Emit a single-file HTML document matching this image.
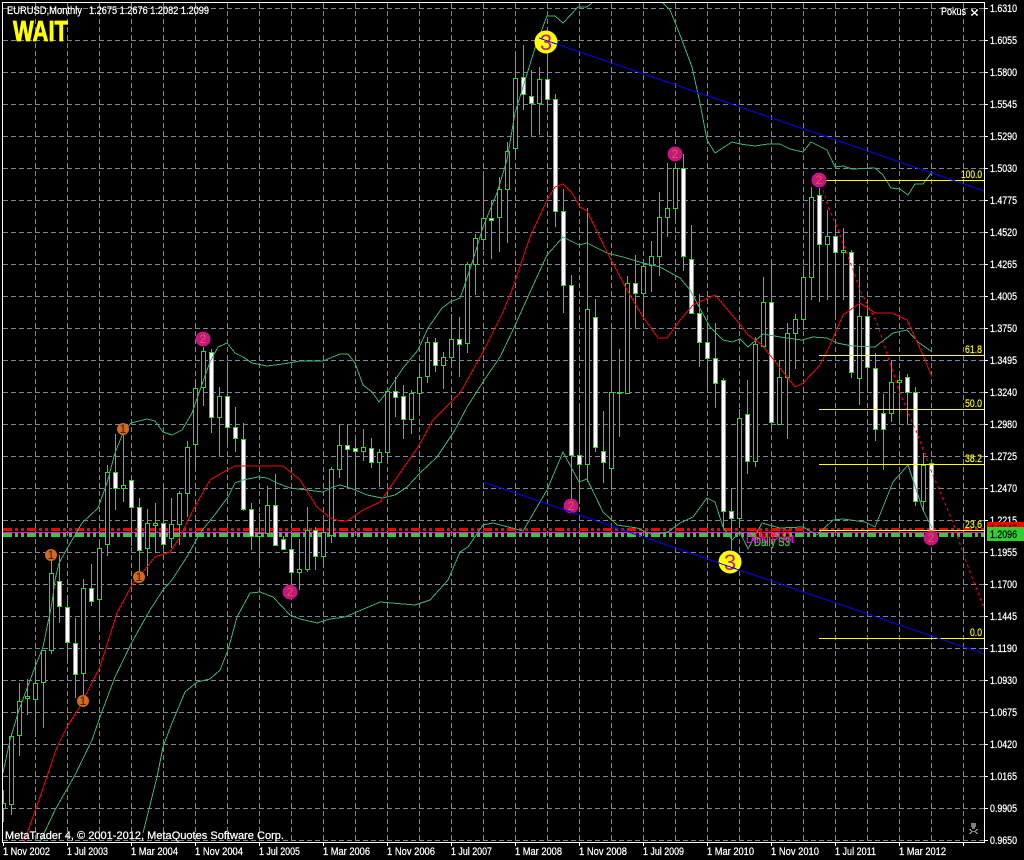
<!DOCTYPE html>
<html lang="en">
<head>
<meta charset="utf-8">
<title>EURUSD,Monthly</title>
<style>
html,body{margin:0;padding:0;background:#000;width:1024px;height:860px;overflow:hidden}
svg{display:block;position:absolute;left:0;top:0}
text{font-family:"Liberation Sans",sans-serif;font-size:11px;fill:#fff}
.t{stroke:#fff;stroke-width:.25}
.l{fill:#ffff00;stroke:#ffff00;stroke-width:.2}
</style>
</head>
<body>
<svg width="1024" height="860" viewBox="0 0 1024 860" xmlns="http://www.w3.org/2000/svg">
<rect width="1024" height="860" fill="#000"/>
<!-- grid -->
<path fill="none" stroke="#778899" stroke-width="1" stroke-dasharray="5 3" shape-rendering="crispEdges" d="M3 8.5H984M3 40.5H984M3 72.5H984M3 104.5H984M3 136.5H984M3 168.5H984M3 200.5H984M3 232.5H984M3 264.5H984M3 296.5H984M3 328.5H984M3 360.5H984M3 392.5H984M3 424.5H984M3 456.5H984M3 488.5H984M3 520.5H984M3 552.5H984M3 584.5H984M3 616.5H984M3 648.5H984M3 680.5H984M3 712.5H984M3 744.5H984M3 776.5H984M3 808.5H984M3 840.5H984M35.5 3V842M67.5 3V842M99.5 3V842M131.5 3V842M163.5 3V842M195.5 3V842M227.5 3V842M259.5 3V842M291.5 3V842M323.5 3V842M355.5 3V842M387.5 3V842M419.5 3V842M451.5 3V842M483.5 3V842M515.5 3V842M547.5 3V842M579.5 3V842M611.5 3V842M643.5 3V842M675.5 3V842M707.5 3V842M739.5 3V842M771.5 3V842M803.5 3V842M835.5 3V842M867.5 3V842M899.5 3V842M931.5 3V842M963.5 3V842"/>
<!-- horizontal level bands -->
<g shape-rendering="crispEdges" fill="none">
<path d="M3 529.5H984" stroke="#ff0000" stroke-width="3" stroke-dasharray="9 3 3 3 3 3"/>
<path d="M3 535H984" stroke="#32cd32" stroke-width="4" stroke-dasharray="9 3 3 3 3 3"/>
<path d="M3 532.5H984" stroke="#ff00ff" stroke-width="1"/>
</g>
<!-- candle wicks -->
<path fill="none" stroke="#10f010" shape-rendering="crispEdges" d="M3.5 790V822M11.5 733V815M19.5 683V756M27.5 679V715M35.5 662V737M43.5 650V728M51.5 559V654M59.5 555V623M67.5 595V659M75.5 618V698M83.5 579V696M91.5 564V606M99.5 542V627M107.5 465V556M115.5 434V510M123.5 435V502M131.5 480V546M139.5 498V572M147.5 509V576M155.5 503V553M163.5 489V548M171.5 498V548M179.5 491V545M187.5 441V517M195.5 380V467M203.5 347V406M211.5 349V433M219.5 387V457M227.5 362V443M235.5 407V452M243.5 423V511M251.5 503V550M259.5 513V563M267.5 486V533M275.5 474V545M283.5 536V550M291.5 533V590M299.5 539V590M307.5 507V572M315.5 527V570M323.5 520V568M331.5 467V543M339.5 425V478M347.5 425V487M355.5 439V490M363.5 429V461M371.5 438V468M379.5 449V487M387.5 390V462M395.5 377V417M403.5 385V439M411.5 390V434M419.5 368V413M427.5 337V383M435.5 338V372M443.5 352V389M451.5 314V363M459.5 317V377M467.5 262V353M475.5 234V295M483.5 176V250M491.5 201V259M499.5 177V252M507.5 142V243M515.5 56V155M523.5 45V110M531.5 70V137M539.5 67V135M547.5 53V107M555.5 94V227M563.5 189V313M571.5 275V502M579.5 408V502M587.5 208V482M595.5 299V452M603.5 411V483M611.5 330V490M619.5 349V437M627.5 276V393M635.5 255V328M643.5 259V318M651.5 241V292M659.5 192V276M667.5 163V237M675.5 163V220M683.5 154V271M691.5 225V313M699.5 294V367M707.5 323V390M715.5 323V408M723.5 378V528M731.5 488V550M739.5 409V527M747.5 380V474M755.5 337V467M763.5 277V346M771.5 262V427M779.5 360V425M787.5 323V439M795.5 314V369M803.5 266V330M811.5 187V300M819.5 188V302M827.5 210V300M835.5 224V318M843.5 228V300M851.5 250V378M859.5 266V405M867.5 305V387M875.5 353V441M883.5 394V470M891.5 361V422M899.5 376V422M907.5 374V424M915.5 387V506M923.5 453V512M931.5 463V538"/>
<!-- bull bodies -->
<path fill="#000" stroke="#10f010" shape-rendering="crispEdges" d="M1.5 803.5h4V808.5h-4zM9.5 736.5h4V804.5h-4zM17.5 701.5h4V735.5h-4zM25.5 696.5h4V698.5h-4zM33.5 683.5h4V699.5h-4zM41.5 650.5h4V682.5h-4zM49.5 573.5h4V650.5h-4zM81.5 588.5h4V673.5h-4zM97.5 548.5h4V599.5h-4zM105.5 472.5h4V544.5h-4zM121.5 485.5h4V488.5h-4zM145.5 523.5h4V548.5h-4zM153.5 523.5h4V525.5h-4zM169.5 524.5h4V538.5h-4zM177.5 493.5h4V524.5h-4zM185.5 447.5h4V493.5h-4zM193.5 388.5h4V444.5h-4zM201.5 351.5h4V387.5h-4zM217.5 396.5h4V417.5h-4zM257.5 533.5h4V536.5h-4zM265.5 505.5h4V533.5h-4zM297.5 569.5h4V572.5h-4zM305.5 530.5h4V569.5h-4zM321.5 532.5h4V556.5h-4zM329.5 469.5h4V535.5h-4zM337.5 445.5h4V469.5h-4zM361.5 447.5h4V451.5h-4zM377.5 452.5h4V462.5h-4zM385.5 391.5h4V452.5h-4zM409.5 393.5h4V419.5h-4zM417.5 377.5h4V393.5h-4zM425.5 342.5h4V376.5h-4zM441.5 357.5h4V365.5h-4zM449.5 339.5h4V357.5h-4zM465.5 264.5h4V343.5h-4zM473.5 238.5h4V264.5h-4zM481.5 218.5h4V239.5h-4zM497.5 189.5h4V217.5h-4zM505.5 151.5h4V189.5h-4zM513.5 78.5h4V148.5h-4zM537.5 79.5h4V103.5h-4zM585.5 309.5h4V464.5h-4zM609.5 392.5h4V468.5h-4zM617.5 392.5h4V393.5h-4zM625.5 283.5h4V393.5h-4zM641.5 266.5h4V293.5h-4zM649.5 256.5h4V265.5h-4zM657.5 217.5h4V256.5h-4zM665.5 208.5h4V217.5h-4zM673.5 168.5h4V208.5h-4zM737.5 418.5h4V518.5h-4zM753.5 344.5h4V461.5h-4zM761.5 302.5h4V346.5h-4zM777.5 377.5h4V424.5h-4zM785.5 333.5h4V377.5h-4zM793.5 319.5h4V333.5h-4zM801.5 277.5h4V319.5h-4zM809.5 197.5h4V277.5h-4zM825.5 236.5h4V244.5h-4zM841.5 250.5h4V252.5h-4zM857.5 316.5h4V378.5h-4zM889.5 382.5h4V413.5h-4zM897.5 380.5h4V382.5h-4zM921.5 465.5h4V501.5h-4z"/>
<!-- bear bodies -->
<path fill="#fff" stroke="#10f010" shape-rendering="crispEdges" d="M57.5 581.5h4V606.5h-4zM65.5 607.5h4V642.5h-4zM73.5 643.5h4V674.5h-4zM89.5 588.5h4V601.5h-4zM113.5 472.5h4V488.5h-4zM129.5 480.5h4V507.5h-4zM137.5 507.5h4V550.5h-4zM161.5 523.5h4V544.5h-4zM209.5 352.5h4V417.5h-4zM225.5 396.5h4V427.5h-4zM233.5 427.5h4V438.5h-4zM241.5 439.5h4V509.5h-4zM249.5 509.5h4V536.5h-4zM273.5 505.5h4V545.5h-4zM281.5 539.5h4V549.5h-4zM289.5 549.5h4V572.5h-4zM313.5 530.5h4V556.5h-4zM345.5 445.5h4V449.5h-4zM353.5 448.5h4V451.5h-4zM369.5 448.5h4V462.5h-4zM393.5 391.5h4V397.5h-4zM401.5 396.5h4V419.5h-4zM433.5 342.5h4V365.5h-4zM457.5 339.5h4V344.5h-4zM489.5 218.5h4V220.5h-4zM521.5 77.5h4V94.5h-4zM529.5 96.5h4V103.5h-4zM545.5 79.5h4V99.5h-4zM553.5 99.5h4V211.5h-4zM561.5 211.5h4V285.5h-4zM569.5 285.5h4V455.5h-4zM577.5 455.5h4V464.5h-4zM593.5 317.5h4V447.5h-4zM601.5 451.5h4V462.5h-4zM633.5 283.5h4V293.5h-4zM681.5 168.5h4V256.5h-4zM689.5 259.5h4V313.5h-4zM697.5 313.5h4V342.5h-4zM705.5 342.5h4V358.5h-4zM713.5 358.5h4V383.5h-4zM721.5 380.5h4V511.5h-4zM729.5 511.5h4V518.5h-4zM745.5 414.5h4V461.5h-4zM769.5 302.5h4V422.5h-4zM817.5 195.5h4V244.5h-4zM833.5 236.5h4V252.5h-4zM849.5 252.5h4V372.5h-4zM865.5 316.5h4V367.5h-4zM873.5 368.5h4V429.5h-4zM881.5 413.5h4V429.5h-4zM905.5 377.5h4V392.5h-4zM913.5 392.5h4V501.5h-4zM929.5 463.5h4V530.5h-4z"/>
<!-- bollinger / MA lines -->
<g fill="none" shape-rendering="crispEdges">
<polyline stroke="#3cb371" points="3,773 10,740 19,710 35,667 43,647 52,603 55,580 59,563 68,547 82,523 98,508 107,483 115,453 123,433 131,423 147,419 155,421 163,432 172,435 182,430 192,413 200,390 210,362 218,347 227,343 235,353 243,357 252,363 267,366 283,364 300,361 323,361 340,354 348,354 355,363 363,385 372,392 379,402 390,388 403,368 418,350 428,328 442,308 450,302 460,298 463,290 473,260 483,227 497,193 507,160 515,113 523,87 535,48 547,16 555,16 563,23 578,7 587,7 592,3"/>
<polyline stroke="#3cb371" points="663,3 670,10 680,35 692,67 700,103 707,140 715,153 732,142 740,144 755,146 768,144 780,144 790,149 803,152 811,142 827,150 835,167 843,166 852,169 875,168 883,175 891,188 900,189 908,195 915,184 923,184 932,172"/>
<polyline stroke="#3cb371" points="40,842 55,810 75,775 92,740 100,717 115,677 132,642 150,610 163,590 172,580 188,555 200,533 213,517 228,497 235,483 243,480 258,477 267,478 277,483 290,488 307,490 323,492 333,487 340,485 353,489 367,495 382,498 395,495 407,487 420,473 437,457 455,430 467,407 483,382 500,357 512,332 531,290 547,255 563,237 579,245 587,243 607,253 623,257 643,263 660,267 680,278 690,290 710,327 723,340 732,342 740,339 748,347 763,334 780,337 802,340 813,337 827,338 837,343 852,346 875,347 893,333 907,330 918,342 932,352"/>
<polyline stroke="#3cb371" points="143,833 157,777 163,747 172,723 185,692 197,682 210,679 220,670 228,650 237,617 250,593 260,592 273,597 290,615 300,619 317,623 330,619 345,617 380,602 415,605 430,600 448,580 460,552 468,547 483,525 493,523 508,527 523,531 537,507 547,490 563,452 579,482 587,479 603,512 617,525 637,528 653,535 668,532 680,523 693,517 707,498 715,502 723,527 732,540 740,532 748,549 762,523 780,528 803,527 817,535 833,520 843,519 865,522 875,527 893,482 908,465 923,510 932,528"/>
<polyline stroke="#ff0000" points="24,842 40,797 57,747 68,725 78,710 100,667 117,613 133,583 143,572 155,557 170,552 180,537 193,510 210,480 227,470 235,466 257,466 283,466 300,480 317,507 330,518 340,521 347,521 363,510 380,502 400,473 418,447 433,420 460,393 483,352 503,312 512,290 530,237 547,200 555,187 563,184 572,193 580,207 587,211 607,252 627,290 643,317 658,338 667,338 680,320 693,305 715,295 738,322 748,335 762,345 795,387 803,383 820,365 830,345 843,315 860,303 875,313 892,313 907,320 923,355 932,377"/>
<polyline stroke="#ff0000" stroke-dasharray="3 3" points="823,190 828,207 837,227 843,243 852,267 860,290 877,323 890,363 900,393 908,413 917,433 932,473 952,520 963,553 973,580 984,608"/>
</g>
<!-- labels overlapping -->
<text x="746" y="543" style="font-size:12px;fill:#ff00ff;stroke:#ff00ff;stroke-width:.2" textLength="48" lengthAdjust="spacingAndGlyphs">Daily Pivot</text>
<text x="755" y="538" style="font-size:12px;fill:#ff0000;stroke:#ff0000;stroke-width:.2" textLength="35" lengthAdjust="spacingAndGlyphs">Daily R3</text>
<text x="754" y="546" style="font-size:12px;fill:#32cd32;stroke:#32cd32;stroke-width:.3" textLength="36" lengthAdjust="spacingAndGlyphs">Daily S3</text>
<!-- fibonacci -->
<path fill="none" stroke="#ffff00" shape-rendering="crispEdges" d="M819 180.5H984M819 355.5H984M819 409.5H984M819 464.5H984M819 530.5H984M819 638.5H984"/>
<text class="l" x="961" y="178" textLength="21" lengthAdjust="spacingAndGlyphs">100.0</text>
<text class="l" x="965" y="353" textLength="17" lengthAdjust="spacingAndGlyphs">61.8</text>
<text class="l" x="965" y="407" textLength="17" lengthAdjust="spacingAndGlyphs">50.0</text>
<text class="l" x="965" y="462" textLength="17" lengthAdjust="spacingAndGlyphs">38.2</text>
<text class="l" x="965" y="528" textLength="17" lengthAdjust="spacingAndGlyphs">23.6</text>
<text class="l" x="970" y="636" textLength="12" lengthAdjust="spacingAndGlyphs">0.0</text>
<!-- markers -->
<g text-anchor="middle">
<circle cx="546" cy="42" r="11.5" fill="#ffff00"/><text x="546" y="50" style="font-size:22px;fill:#c71585">3</text>
<circle cx="730" cy="562" r="11.5" fill="#ffff00"/><text x="730" y="570" style="font-size:22px;fill:#c71585">3</text>
<circle cx="203" cy="339" r="7.5" fill="#c71585"/><text x="203" y="343" style="font-size:12px;fill:#d2691e">2</text>
<circle cx="675" cy="154" r="7.5" fill="#c71585"/><text x="675" y="158" style="font-size:12px;fill:#d2691e">2</text>
<circle cx="819" cy="180" r="7.5" fill="#c71585"/><text x="819" y="184" style="font-size:12px;fill:#d2691e">2</text>
<circle cx="571" cy="506" r="7.5" fill="#c71585"/><text x="571" y="510" style="font-size:12px;fill:#d2691e">2</text>
<circle cx="290" cy="592" r="7.5" fill="#c71585"/><text x="290" y="596" style="font-size:12px;fill:#d2691e">2</text>
<circle cx="931" cy="538" r="7.5" fill="#c71585"/><text x="931" y="542" style="font-size:12px;fill:#d2691e">2</text>
<circle cx="123" cy="429" r="6" fill="#d2691e"/><text x="123" y="433" style="font-size:12px;fill:#222">1</text>
<circle cx="51" cy="555" r="6" fill="#d2691e"/><text x="51" y="559" style="font-size:12px;fill:#222">1</text>
<circle cx="139" cy="577" r="6" fill="#d2691e"/><text x="139" y="581" style="font-size:12px;fill:#222">1</text>
<circle cx="83" cy="701" r="6" fill="#d2691e"/><text x="83" y="705" style="font-size:12px;fill:#222">1</text>
</g>
<!-- blue trend lines -->
<g fill="none" stroke="#0000ff" shape-rendering="crispEdges">
<line x1="539" y1="38" x2="984" y2="191"/>
<line x1="483" y1="482" x2="984" y2="654"/>
</g>
<!-- frame -->
<rect x="0" y="0" width="2" height="860" fill="#000"/>
<path fill="none" stroke="#fff" shape-rendering="crispEdges" d="M2.5 2V842M2 2.5H985M984.5 2V842M2 842.5H985M3.5 842V846M67.5 842V846M131.5 842V846M195.5 842V846M259.5 842V846M323.5 842V846M387.5 842V846M451.5 842V846M515.5 842V846M579.5 842V846M643.5 842V846M707.5 842V846M771.5 842V846M835.5 842V846M899.5 842V846M963.5 842V846M985 8.5H988M985 40.5H988M985 72.5H988M985 104.5H988M985 136.5H988M985 168.5H988M985 200.5H988M985 232.5H988M985 264.5H988M985 296.5H988M985 328.5H988M985 360.5H988M985 392.5H988M985 424.5H988M985 456.5H988M985 488.5H988M985 520.5H988M985 552.5H988M985 584.5H988M985 616.5H988M985 648.5H988M985 680.5H988M985 712.5H988M985 744.5H988M985 776.5H988M985 808.5H988M985 840.5H988"/>
<!-- price labels -->
<g class="t">
<text x="990" y="12" textLength="27" lengthAdjust="spacingAndGlyphs">1.6310</text>
<text x="990" y="44" textLength="27" lengthAdjust="spacingAndGlyphs">1.6055</text>
<text x="990" y="76" textLength="27" lengthAdjust="spacingAndGlyphs">1.5800</text>
<text x="990" y="108" textLength="27" lengthAdjust="spacingAndGlyphs">1.5545</text>
<text x="990" y="140" textLength="27" lengthAdjust="spacingAndGlyphs">1.5290</text>
<text x="990" y="172" textLength="27" lengthAdjust="spacingAndGlyphs">1.5030</text>
<text x="990" y="204" textLength="27" lengthAdjust="spacingAndGlyphs">1.4775</text>
<text x="990" y="236" textLength="27" lengthAdjust="spacingAndGlyphs">1.4520</text>
<text x="990" y="268" textLength="27" lengthAdjust="spacingAndGlyphs">1.4265</text>
<text x="990" y="300" textLength="27" lengthAdjust="spacingAndGlyphs">1.4005</text>
<text x="990" y="332" textLength="27" lengthAdjust="spacingAndGlyphs">1.3750</text>
<text x="990" y="364" textLength="27" lengthAdjust="spacingAndGlyphs">1.3495</text>
<text x="990" y="396" textLength="27" lengthAdjust="spacingAndGlyphs">1.3240</text>
<text x="990" y="428" textLength="27" lengthAdjust="spacingAndGlyphs">1.2980</text>
<text x="990" y="460" textLength="27" lengthAdjust="spacingAndGlyphs">1.2725</text>
<text x="990" y="492" textLength="27" lengthAdjust="spacingAndGlyphs">1.2470</text>
<text x="990" y="524" textLength="27" lengthAdjust="spacingAndGlyphs">1.2215</text>
<text x="990" y="556" textLength="27" lengthAdjust="spacingAndGlyphs">1.1955</text>
<text x="990" y="588" textLength="27" lengthAdjust="spacingAndGlyphs">1.1700</text>
<text x="990" y="620" textLength="27" lengthAdjust="spacingAndGlyphs">1.1445</text>
<text x="990" y="652" textLength="27" lengthAdjust="spacingAndGlyphs">1.1190</text>
<text x="990" y="684" textLength="27" lengthAdjust="spacingAndGlyphs">1.0930</text>
<text x="990" y="716" textLength="27" lengthAdjust="spacingAndGlyphs">1.0675</text>
<text x="990" y="748" textLength="27" lengthAdjust="spacingAndGlyphs">1.0420</text>
<text x="990" y="780" textLength="27" lengthAdjust="spacingAndGlyphs">1.0165</text>
<text x="990" y="812" textLength="27" lengthAdjust="spacingAndGlyphs">0.9905</text>
<text x="990" y="844" textLength="27" lengthAdjust="spacingAndGlyphs">0.9650</text>
</g>
<!-- price tags -->
<rect x="987" y="522" width="37" height="6" fill="#ff0000"/>
<text x="990" y="532" style="fill:#000" textLength="27" lengthAdjust="spacingAndGlyphs">1.2147</text>
<rect x="987" y="527" width="37" height="14" fill="#32cd32"/>
<text x="990" y="538" style="fill:#000;stroke:#000;stroke-width:.2" textLength="27" lengthAdjust="spacingAndGlyphs">1.2096</text>
<!-- date labels -->
<g class="t">
<text x="3" y="855" textLength="47" lengthAdjust="spacingAndGlyphs">1 Nov 2002</text>
<text x="67" y="855" textLength="41" lengthAdjust="spacingAndGlyphs">1 Jul 2003</text>
<text x="131" y="855" textLength="47" lengthAdjust="spacingAndGlyphs">1 Mar 2004</text>
<text x="195" y="855" textLength="48" lengthAdjust="spacingAndGlyphs">1 Nov 2004</text>
<text x="259" y="855" textLength="41" lengthAdjust="spacingAndGlyphs">1 Jul 2005</text>
<text x="323" y="855" textLength="47" lengthAdjust="spacingAndGlyphs">1 Mar 2006</text>
<text x="387" y="855" textLength="48" lengthAdjust="spacingAndGlyphs">1 Nov 2006</text>
<text x="451" y="855" textLength="41" lengthAdjust="spacingAndGlyphs">1 Jul 2007</text>
<text x="515" y="855" textLength="47" lengthAdjust="spacingAndGlyphs">1 Mar 2008</text>
<text x="579" y="855" textLength="48" lengthAdjust="spacingAndGlyphs">1 Nov 2008</text>
<text x="643" y="855" textLength="41" lengthAdjust="spacingAndGlyphs">1 Jul 2009</text>
<text x="707" y="855" textLength="47" lengthAdjust="spacingAndGlyphs">1 Mar 2010</text>
<text x="771" y="855" textLength="48" lengthAdjust="spacingAndGlyphs">1 Nov 2010</text>
<text x="835" y="855" textLength="41" lengthAdjust="spacingAndGlyphs">1 Jul 2011</text>
<text x="899" y="855" textLength="47" lengthAdjust="spacingAndGlyphs">1 Mar 2012</text>
</g>
<!-- captions -->
<g class="t">
<text x="7" y="14" textLength="75" lengthAdjust="spacingAndGlyphs">EURUSD,Monthly</text>
<text x="89" y="14" textLength="120" lengthAdjust="spacingAndGlyphs">1.2675 1.2676 1.2082 1.2099</text>
<text x="941" y="15" textLength="25" lengthAdjust="spacingAndGlyphs">Pokus</text>
<text x="5" y="839" textLength="279" lengthAdjust="spacingAndGlyphs">MetaTrader 4, © 2001-2012, MetaQuotes Software Corp.</text>
</g>
<text x="13" y="41" style="font-size:29px;font-weight:bold;fill:#ffff00;stroke:#ffff00;stroke-width:.8" textLength="55" lengthAdjust="spacingAndGlyphs">WAIT</text>
<path d="M972 10.5l5 4.5M977 10.5l-5 4.5M971 10h2M976 10h2M971 15h2M976 15h2" stroke="#fff" stroke-width="1.3" fill="none"/>
<!-- skull -->
<g fill="#808080" shape-rendering="crispEdges">
<path d="M971 823h5v4h-1v2h-3v-2h-1z"/>
<path d="M969 829h2v1h1v1h3v-1h1v-1h2v1h-1v1h-1v1h1v1h1v1h-2v-1h-1v-1h-3v1h-1v1h-2v-1h1v-1h1v-1h-1v-1h-1z"/>
</g>
</svg>
</body>
</html>
